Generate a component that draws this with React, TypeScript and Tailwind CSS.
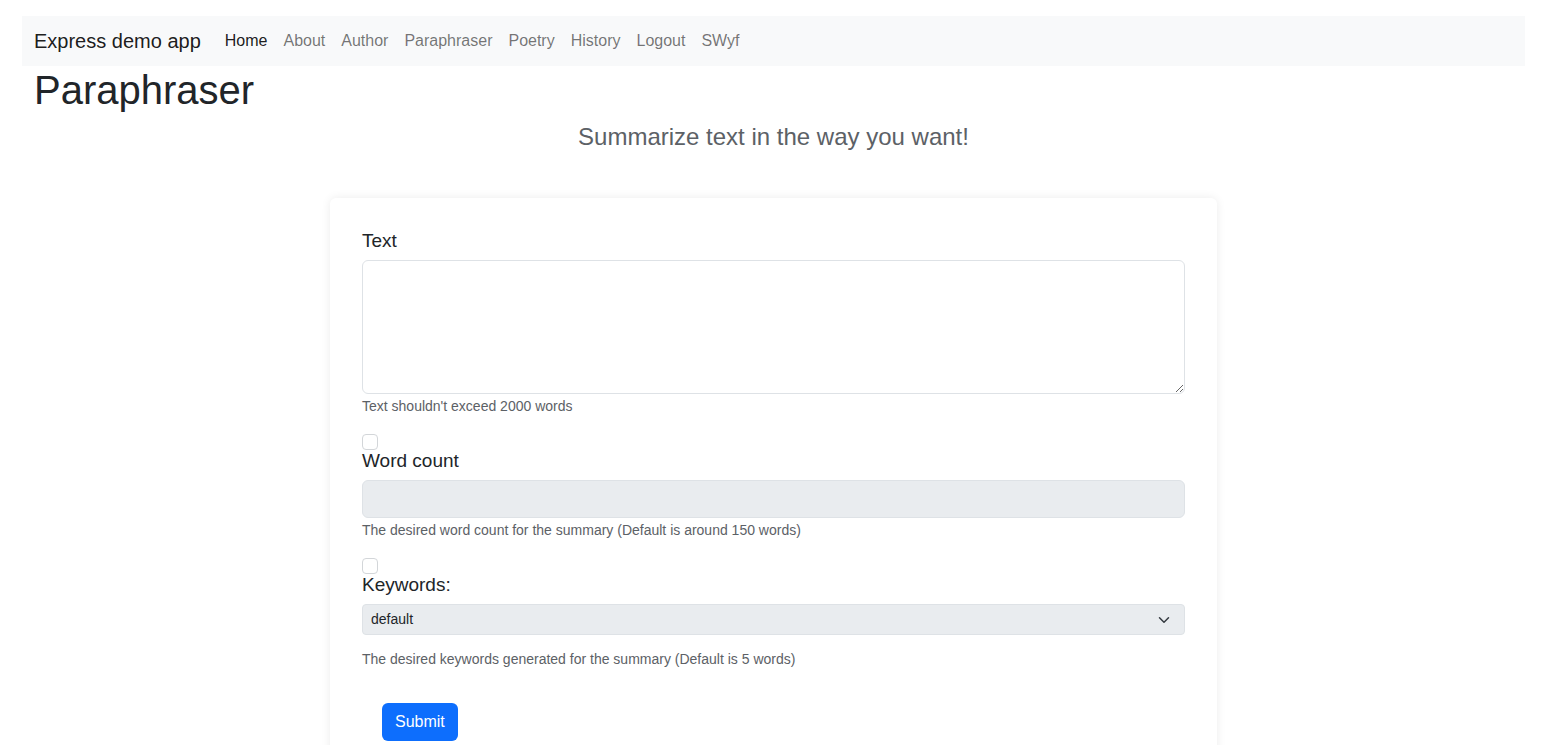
import React from "react";

const font = { fontFamily: '"Liberation Sans", Arial, sans-serif' };

export default function App() {
  const links = ["Home", "About", "Author", "Paraphraser", "Poetry", "History", "Logout", "SWyf"];
  return (
    <div className="min-h-screen bg-white text-[#212529]" style={font}>
      <div className="ml-[22px] w-[1503px] pt-4">
        <nav className="flex h-[50px] items-center bg-[#f8f9fa] px-3">
          <span className="mr-4 text-[20px] leading-[30px] text-[rgba(0,0,0,0.9)]">Express demo app</span>
          <ul className="flex items-center">
            {links.map((l, i) => (
              <li key={l}>
                <a
                  className={
                    "block px-2 text-[16px] leading-6 " +
                    (i === 0 ? "text-[rgba(0,0,0,0.9)]" : "text-[rgba(0,0,0,0.55)]")
                  }
                  href="#"
                >
                  {l}
                </a>
              </li>
            ))}
          </ul>
        </nav>
        <h1 className="mb-2 px-3 text-[40px] font-normal leading-[48px]">Paraphraser</h1>
        <p className="text-center text-[24px] leading-[29px] text-[#5c6166]">Summarize text in the way you want!</p>
        <div className="mx-auto mt-[47px] w-[887px] rounded-md bg-white px-8 pt-8 pb-8 shadow-[0_0_10px_rgba(0,0,0,0.08)]">
          <label className="mb-2 block text-[19px] leading-[22px]">Text</label>
          <textarea className="block h-[134px] w-full rounded-md border border-[#dee2e6] bg-white px-3 py-1.5 outline-none" />
          <div className="mt-[2px] text-[14px] leading-[21px] text-[#5c6166]">Text shouldn't exceed 2000 words</div>

          <div className="mt-[17px] h-4 w-4 rounded-[4px] border border-[#d3d6d9] bg-white" />
          <label className="mb-2 block text-[19px] leading-[22px]">Word count</label>
          <div className="h-[38px] w-full rounded-md border border-[#dee2e6] bg-[#e9ecef]" />
          <div className="mt-[2px] text-[14px] leading-[21px] text-[#5c6166]">
            The desired word count for the summary (Default is around 150 words)
          </div>

          <div className="mt-[17px] h-4 w-4 rounded-[4px] border border-[#d3d6d9] bg-white" />
          <label className="mb-2 block text-[19px] leading-[22px]">Keywords:</label>
          <div className="flex h-[31px] w-full items-center justify-between rounded-[4px] border border-[#dee2e6] bg-[#e9ecef] pl-2 pr-3">
            <span className="text-[14px] leading-[21px] text-[#212529]">default</span>
            <svg width="16" height="12" viewBox="0 0 16 16" fill="none">
              <path d="m2 5 6 6 6-6" stroke="#343a40" strokeWidth="2" strokeLinecap="round" strokeLinejoin="round" />
            </svg>
          </div>
          <div className="mt-[14px] text-[14px] leading-[21px] text-[#5c6166]">
            The desired keywords generated for the summary (Default is 5 words)
          </div>

          <button className="ml-5 mt-[33px] h-[38px] rounded-md bg-[#0d6efd] px-[13px] text-[16px] leading-6 text-white">
            Submit
          </button>
          <div className="h-10" />
        </div>
      </div>
    </div>
  );
}
